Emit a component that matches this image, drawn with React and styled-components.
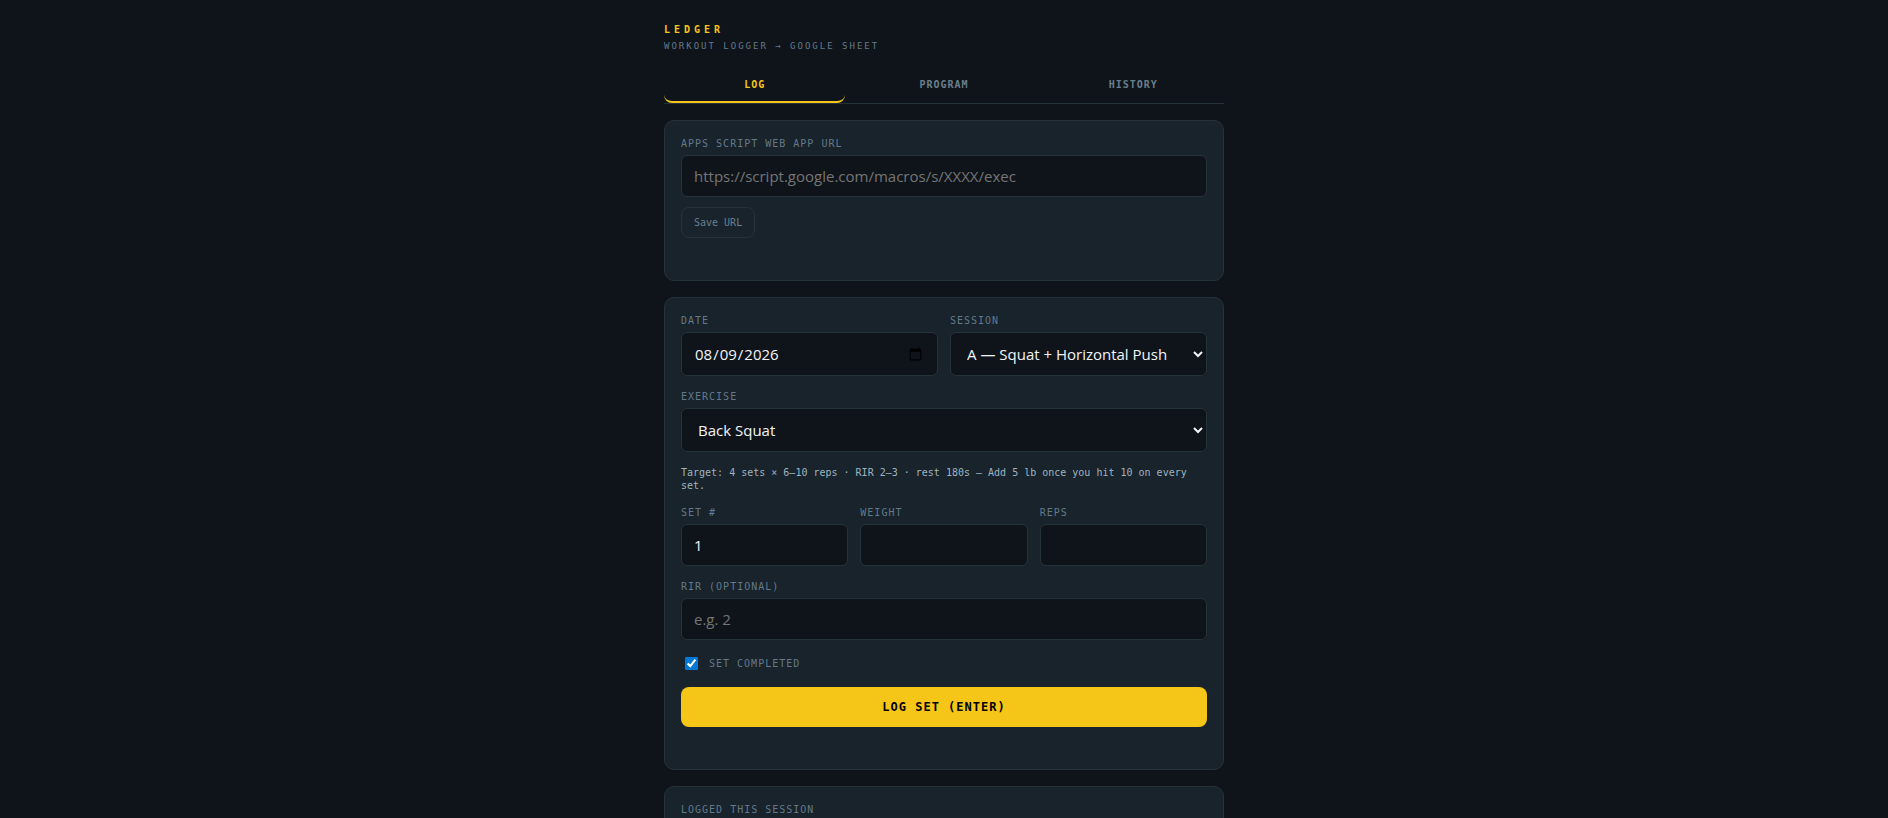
import React, {useState} from 'react'
import styled, {createGlobalStyle} from 'styled-components'

const sessions = ['A — Squat + Horizontal Push', 'B — Hinge + Vertical Pull'];
const exercises = ['Back Squat', 'Bench Press', 'Barbell Row'];
const tabs = ['Log', 'Program', 'History'];

function App() {
    const [activeTab, setActiveTab] = useState('Log');
    const [completed, setCompleted] = useState(true);

    return (
        <>
            <GlobalStyle/>
            <Page>
                <header>
                    <Title>Ledger</Title>
                    <Subtitle>Workout Logger → Google Sheet</Subtitle>
                </header>
                <Tabs>
                    {tabs.map((tab) => (
                        <Tab key={tab} $active={activeTab === tab} onClick={() => setActiveTab(tab)}>{tab}</Tab>
                    ))}
                </Tabs>

                <Card>
                    <Field>
                        <Label htmlFor="url">Apps Script Web App URL</Label>
                        <Input id="url" type="url" placeholder="https://script.google.com/macros/s/XXXX/exec"/>
                    </Field>
                    <GhostButton type="button">Save URL</GhostButton>
                    <Status/>
                </Card>

                <Card>
                    <Form onSubmit={(e) => e.preventDefault()}>
                        <Row $cols={2}>
                            <Field>
                                <Label htmlFor="date">Date</Label>
                                <Input id="date" type="date" defaultValue="2026-08-09" $tall/>
                            </Field>
                            <Field>
                                <Label htmlFor="session">Session</Label>
                                <Select id="session">
                                    {sessions.map((name) => <option key={name}>{name}</option>)}
                                </Select>
                            </Field>
                        </Row>
                        <Field>
                            <Label htmlFor="exercise">Exercise</Label>
                            <Select id="exercise">
                                {exercises.map((name) => <option key={name}>{name}</option>)}
                            </Select>
                        </Field>
                        <Target>Target: 4 sets × 6–10 reps · RIR 2–3 · rest 180s — Add 5 lb once you hit 10 on every set.</Target>
                        <Row $cols={3}>
                            <Field>
                                <Label htmlFor="set">Set #</Label>
                                <Input id="set" type="number" defaultValue="1"/>
                            </Field>
                            <Field>
                                <Label htmlFor="weight">Weight</Label>
                                <Input id="weight" type="number"/>
                            </Field>
                            <Field>
                                <Label htmlFor="reps">Reps</Label>
                                <Input id="reps" type="number"/>
                            </Field>
                        </Row>
                        <Field>
                            <Label htmlFor="rir">RIR (optional)</Label>
                            <Input id="rir" type="number" placeholder="e.g. 2"/>
                        </Field>
                        <CheckRow>
                            <Checkbox id="completed" type="checkbox" checked={completed} onChange={(e) => setCompleted(e.target.checked)}/>
                            <Label htmlFor="completed">Set completed</Label>
                        </CheckRow>
                        <SubmitButton type="submit">Log Set (Enter)</SubmitButton>
                    </Form>
                    <Status/>
                </Card>

                <Card>
                    <SectionTitle>Logged this session</SectionTitle>
                </Card>
            </Page>
        </>
    )
}

const mono = '"DejaVu Sans Mono", monospace';
const sans = '"Open Sans", sans-serif';

const GlobalStyle = createGlobalStyle`
    * {
        box-sizing: border-box;
    }
    html {
        scrollbar-width: none;
    }
    body {
        margin: 0;
        background: #0f141a;
        color: #f2f5f7;
        font-family: ${sans};
    }
`;

const Page = styled.main`
    max-width: 592px;
    margin: 0 auto;
    padding: 23px 16px 0;
    display: flex;
    flex-direction: column;
    gap: 16px;
`;

const Title = styled.h1`
    margin: 0 0 4px;
    font: 700 10px/13px ${mono};
    letter-spacing: 4px;
    text-transform: uppercase;
    color: #f5c518;
`;

const Subtitle = styled.p`
    margin: 0;
    font: 9px/12px ${mono};
    letter-spacing: 2px;
    text-transform: uppercase;
    color: #64798a;
`;

const Tabs = styled.nav`
    display: flex;
    gap: 8px;
    border-bottom: 1px solid #26323a;
`;

const Tab = styled.button`
    flex: 1;
    padding: 10px 0;
    background: transparent;
    border: none;
    border-bottom: 2px solid ${({$active}) => $active ? '#f5c518' : 'transparent'};
    border-radius: 8px;
    color: ${({$active}) => $active ? '#f5c518' : '#6b7f8c'};
    font: 700 10px/13px ${mono};
    letter-spacing: 1px;
    text-transform: uppercase;
    cursor: pointer;
`;

const Card = styled.section`
    padding: 16px;
    background: #18232b;
    border: 1px solid #26323a;
    border-radius: 10px;
`;

const Form = styled.form`
    display: flex;
    flex-direction: column;
    gap: 14px;
`;

const Row = styled.div`
    display: grid;
    grid-template-columns: repeat(${({$cols}) => $cols}, 1fr);
    gap: 12px;
`;

const Field = styled.div`
    display: flex;
    flex-direction: column;
    gap: 5px;
    min-width: 0;
`;

const Label = styled.label`
    font: 10px/13px ${mono};
    letter-spacing: 1px;
    text-transform: uppercase;
    color: #64798a;
`;

const SectionTitle = styled.h2`
    margin: 0;
    font: 10px/13px ${mono};
    letter-spacing: 1px;
    text-transform: uppercase;
    color: #64798a;
`;

const Input = styled.input`
    width: 100%;
    height: ${({$tall}) => $tall ? 44 : 42}px;
    padding: 0 12px;
    background: #0f141a;
    border: 1px solid #26323a;
    border-radius: 6px;
    color: #f2f5f7;
    font: 15px ${sans};
    &::placeholder{
        color: #757575;
    }
    &::-webkit-inner-spin-button{
        display: none;
    }
`;

const Select = styled.select`
    width: 100%;
    height: 44px;
    padding: 0 0 0 12px;
    background: #0f141a;
    border: 1px solid #26323a;
    border-radius: 6px;
    color: #f2f5f7;
    font: 15px ${sans};
`;

const GhostButton = styled.button`
    height: 31px;
    margin-top: 10px;
    padding: 0 12px;
    background: transparent;
    border: 1px solid #26323a;
    border-radius: 8px;
    color: #6b7f8c;
    font: 10px ${mono};
    cursor: pointer;
`;

const Target = styled.p`
    margin: 0;
    color: #9fb4c0;
    font: 10px/13px ${mono};
`;

const CheckRow = styled.div`
    display: flex;
    align-items: center;
    gap: 8px;
`;

const Checkbox = styled.input`
    width: 13px;
    height: 13px;
    margin: 3px 3px 3px 4px;
    accent-color: #0078d7;
`;

const SubmitButton = styled.button`
    height: 40px;
    background: #f5c518;
    border: none;
    border-radius: 8px;
    color: #000;
    font: 700 12px ${mono};
    letter-spacing: 1px;
    text-transform: uppercase;
    cursor: pointer;
`;

const Status = styled.div`
    min-height: 16px;
    margin-top: 10px;
`;

export default App
